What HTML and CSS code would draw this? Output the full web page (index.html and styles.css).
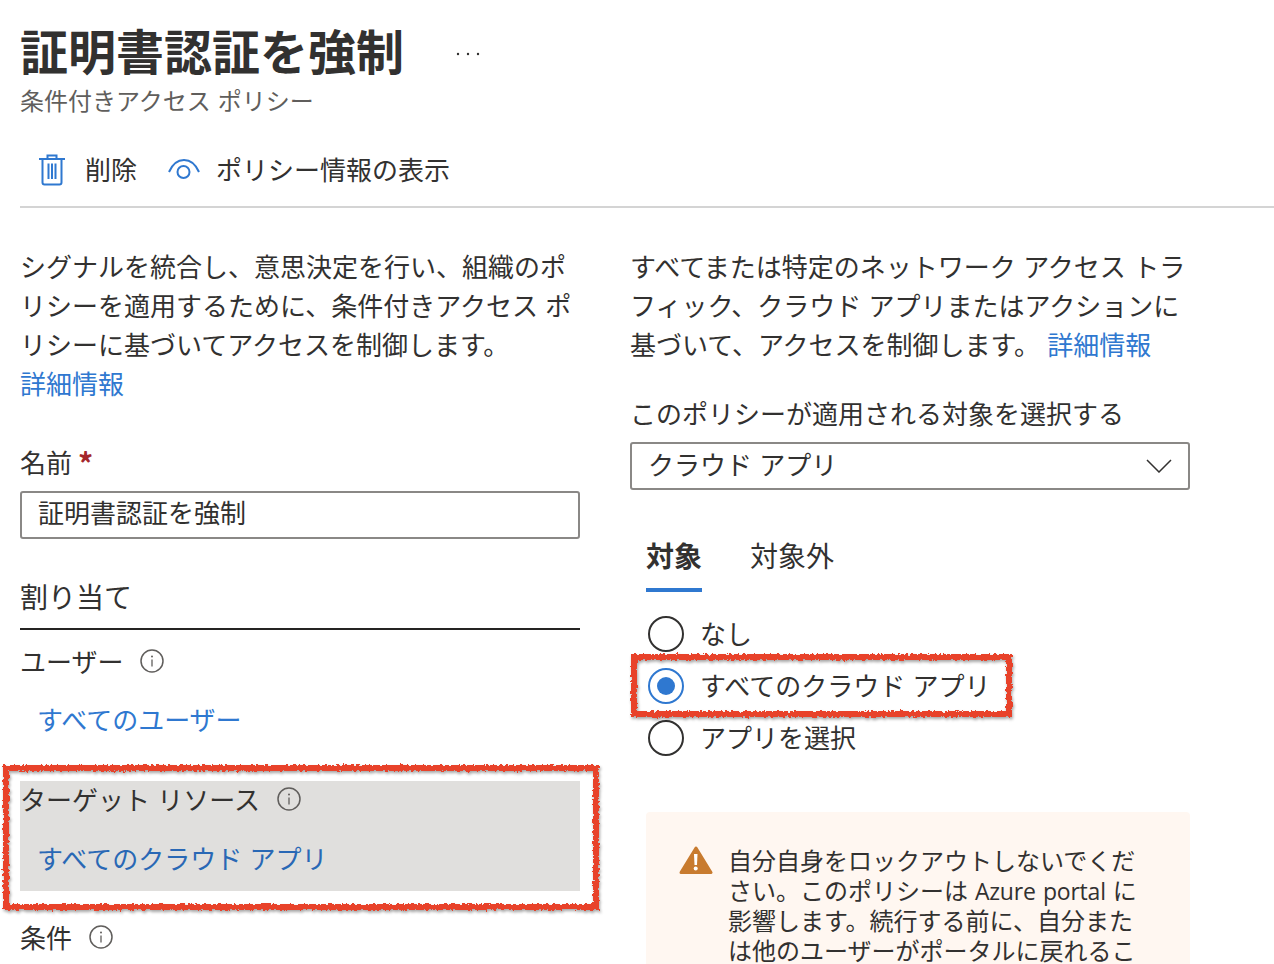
FILE: index.html
```html
<!DOCTYPE html>
<html lang="ja">
<head>
  <meta charset="UTF-8" />
  <title>証明書認証を強制</title>
  <link rel="stylesheet" href="styles.css">
</head>
<body>

  <div class="page">
    <div class="title-row">
      <h1>証明書認証を強制</h1>
      <svg class="more" width="24" height="6" viewBox="0 0 24 6"><circle cx="2" cy="3" r="1.2"/><circle cx="12" cy="3" r="1.2"/><circle cx="22" cy="3" r="1.2"/></svg>
    </div>
    <div class="subtitle">条件付きアクセス ポリシー</div>

    <div class="toolbar">
      <div class="tool">
        <svg width="26" height="32" viewBox="0 0 26 32" fill="none" stroke="#2f78d0" stroke-width="2">
          <path d="M0 5h26M8.500 5V1.500h9V5M3.500 5v23.500q0 2 2 2h15q2 0 2-2V5M9.500 9.500v15.500M13 9.500v15.500M16.500 9.500v15.500"/>
        </svg>
        <span>削除</span>
      </div>
      <div class="tool tool-eye">
        <svg width="32" height="22" viewBox="0 0 32 22" fill="none" stroke="#2f78d0" stroke-width="2">
          <path d="M1 13C8 -3 24 -3 31 13"/>
          <circle cx="15.500" cy="13" r="6"/>
        </svg>
        <span>ポリシー情報の表示</span>
      </div>
    </div>

    <div class="columns">
      <div class="col">
        <p class="desc">シグナルを統合し、意思決定を行い、組織のポリシーを適用するために、条件付きアクセス ポリシーに基づいてアクセスを制御します。<br><a class="link">詳細情報</a></p>

        <div class="label name-label">名前 <span class="req">*</span></div>
        <div class="field">証明書認証を強制</div>

        <div class="section">割り当て</div>

        <div class="label user-label">ユーザー
          <svg class="info" width="24" height="24" viewBox="0 0 24 24"><use href="#info-icon"/></svg>
        </div>
        <a class="link item-link">すべてのユーザー</a>

        <div class="picked">
          <div class="label">ターゲット リソース
            <svg class="info" width="24" height="24" viewBox="0 0 24 24"><use href="#info-icon"/></svg>
          </div>
          <a class="link item-link">すべてのクラウド アプリ</a>
        </div>

        <div class="label cond-label">条件
          <svg class="info" width="24" height="24" viewBox="0 0 24 24"><use href="#info-icon"/></svg>
        </div>
      </div>

      <div class="col">
        <p class="desc">すべてまたは特定のネットワーク アクセス トラフィック、クラウド アプリまたはアクションに基づいて、アクセスを制御します。 <a class="link">詳細情報</a></p>

        <div class="label target-label">このポリシーが適用される対象を選択する</div>
        <div class="field select">
          <span>クラウド アプリ</span>
          <svg width="26" height="14" viewBox="0 0 26 14" fill="none" stroke="#323130" stroke-width="1.500"><path d="M1 1l12 12L25 1"/></svg>
        </div>

        <div class="tabs">
          <div class="tab active">対象</div>
          <div class="tab">対象外</div>
        </div>

        <div class="radios">
          <div class="radio-row"><span class="radio"></span><span class="radio-text">なし</span></div>
          <div class="radio-row"><span class="radio checked"></span><span class="radio-text">すべてのクラウド アプリ</span></div>
          <div class="radio-row"><span class="radio"></span><span class="radio-text">アプリを選択</span></div>
        </div>

        <div class="warning">
          <svg width="34" height="30" viewBox="0 0 34 30"><path d="M17 3L32 27.500H2z" fill="#c87b2f" stroke="#c87b2f" stroke-linejoin="round" stroke-width="3"/><path d="M15 9h3.500l-.5 11h-2.500z" fill="#fff"/><circle cx="16.700" cy="23.500" r="2" fill="#fff"/></svg>
          <div class="warning-text">自分自身をロックアウトしないでください。このポリシーは <span class="latin">Azure portal</span> に影響します。続行する前に、自分または他のユーザーがポータルに戻れるこ</div>
        </div>
      </div>
    </div>

    <!-- hand drawn red marks on top of the screenshot -->
    <svg class="marks" width="1274" height="964" viewBox="0 0 1274 964" fill="none">
      <defs>
        <filter id="rough" x="-5%" y="-5%" width="110%" height="115%">
          <feTurbulence type="fractalNoise" baseFrequency="0.35" numOctaves="2" seed="4"/>
          <feDisplacementMap in="SourceGraphic" scale="5"/>
          <feDropShadow dx="1" dy="2" stdDeviation="1.500" flood-color="#000" flood-opacity="0.35"/>
        </filter>
        <symbol id="info-icon" viewBox="0 0 24 24">
          <circle cx="12" cy="12" r="11" fill="none" stroke="#605e5c" stroke-width="1.500"/>
          <path d="M12 10.500v7" stroke="#605e5c" stroke-width="1.300"/>
          <circle cx="12" cy="7.500" r="1" fill="#605e5c"/>
        </symbol>
      </defs>
      <g filter="url(#rough)" stroke="#e8432a" stroke-width="6">
        <rect x="634" y="657" width="375" height="57"/>
        <rect x="6" y="768" width="590" height="139"/>
      </g>
    </svg>
  </div>

</body>
</html>
```

FILE: styles.css
```css
html, body {
  margin: 0;
  padding: 0;
}
body {
  font-family: "Noto Sans CJK JP", "Open Sans", sans-serif;
  color: #323130;
  background: #fff;
  word-spacing: 1.5px;
}
.page {
  position: relative;
  width: 1274px;
  height: 964px;
  overflow: hidden;
  padding: 19px 0 0 20px;
  box-sizing: border-box;
}
.title-row {
  display: flex;
  align-items: center;
  height: 60px;
}
h1 {
  margin: 0;
  font-size: 48px;
  line-height: 60px;
  font-weight: 700;
}
.more {
  margin: 10px 0 0 52px;
  fill: #323130;
}
.subtitle {
  margin-top: 3px;
  font-size: 24px;
  line-height: 36px;
  color: #605e5c;
}
.toolbar {
  display: flex;
  align-items: center;
  height: 48px;
  margin-top: 28px;
  padding: 0 0 12px 19px;
  border-bottom: 2px solid #d4d4d4;
  font-size: 26px;
}
.tool {
  display: flex;
  align-items: center;
  gap: 20px;
}
.tool span {
  margin-bottom: 4px;
}
.tool-eye {
  margin-left: 31px;
  gap: 16px;
}
.columns {
  display: grid;
  grid-template-columns: 560px 560px;
  column-gap: 50px;
  margin-top: 38px;
}
.desc {
  margin: 0;
  font-size: 26px;
  line-height: 39px;
}
.link {
  color: #2f78d0;
}
.label {
  display: flex;
  align-items: center;
  font-size: 26px;
  line-height: 36px;
}
.name-label {
  margin-top: 42px;
  gap: 6px;
}
.req {
  color: #a4262c;
  font-size: 30px;
  font-weight: 700;
}
.field {
  height: 48px;
  margin-top: 11px;
  padding: 0 16px;
  box-sizing: border-box;
  border: 2px solid #8a8886;
  border-radius: 3px;
  font-size: 26px;
  line-height: 38px;
}
.section {
  margin-top: 37px;
  padding-bottom: 12px;
  border-bottom: 2px solid #252423;
  font-size: 28px;
  line-height: 40px;
}
.info {
  margin-left: 17px;
}
.user-label {
  margin-top: 13px;
}
.item-link {
  display: block;
  margin-top: 22px;
  padding-left: 17px;
  font-size: 26px;
  line-height: 36px;
}
.picked {
  margin-top: 44px;
  padding: 0 0 15px;
  background: #e0dfdd;
}
.picked .item-link {
  margin-top: 23px;
  color: #2968b5;
}
.cond-label {
  margin-top: 28px;
}
.target-label {
  margin-top: 32px;
}
.select {
  display: flex;
  align-items: center;
  justify-content: space-between;
  margin-top: 11px;
  padding-right: 16px;
}
.select span {
  margin-bottom: 4px;
}
.tabs {
  display: flex;
  gap: 48px;
  margin: 45px 0 0 16px;
}
.tab {
  padding-bottom: 13px;
  border-bottom: 4px solid transparent;
  font-size: 28px;
  line-height: 40px;
}
.tab.active {
  font-weight: 700;
  border-bottom-color: #2f78d0;
}
.radios {
  margin: 16px 0 0 18px;
}
.radio-row {
  display: flex;
  align-items: center;
  gap: 16px;
  height: 52px;
  font-size: 26px;
}
.radio-text {
  margin-bottom: 4px;
}
.radio {
  width: 36px;
  height: 36px;
  box-sizing: border-box;
  border: 2px solid #323130;
  border-radius: 50%;
  display: flex;
  align-items: center;
  justify-content: center;
}
.radio.checked {
  border-color: #2f78d0;
}
.radio.checked::after {
  content: "";
  width: 18px;
  height: 18px;
  border-radius: 50%;
  background: #2f78d0;
}
.warning {
  display: flex;
  gap: 15px;
  margin: 48px 0 0 16px;
  padding: 33px 0 20px 33px;
  background: #fff7f1;
  border-radius: 4px;
}
.warning svg {
  flex: none;
}
.warning-text {
  width: 412px;
  font-size: 24px;
  line-height: 30px;
}
.latin {
  font-family: "Open Sans", sans-serif;
  font-size: 23px;
  line-height: 1;
  letter-spacing: -0.2px;
}
.marks {
  position: absolute;
  top: 0;
  left: 0;
}
```
